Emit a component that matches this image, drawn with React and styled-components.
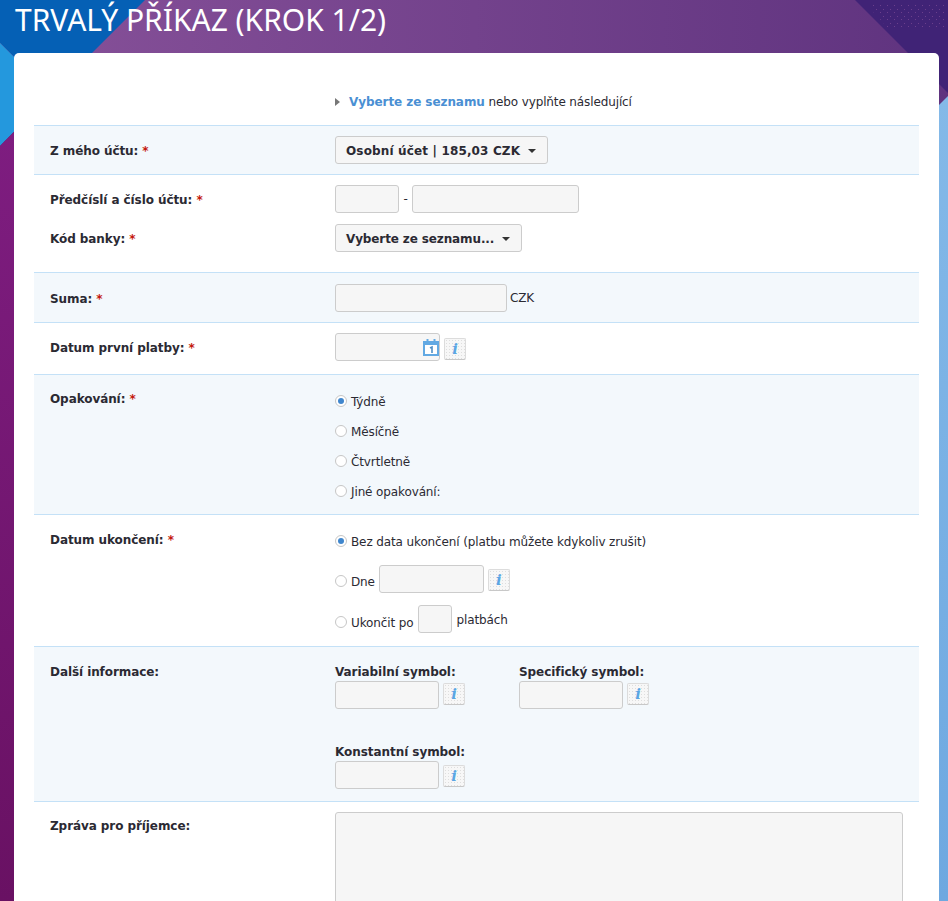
import React from "react"
import styled, { createGlobalStyle } from "styled-components"

const Global = createGlobalStyle`
html, body { margin: 0; padding: 0; height: 100%; overflow: hidden; }
body { font-family: "DejaVu Sans", Verdana, sans-serif; font-size: 12px; letter-spacing: -0.12px; color: #2b2a33; background: #6b1165; }
`

const Page = styled.div`
position: relative;
height: 100vh;
overflow: hidden;
`
const Backdrop = styled.svg`
position: absolute;
top: 0;
left: 0;
width: 948px;
height: 901px;
`
const Content = styled.div`
position: relative;
padding: 0 9px 0 14px;
`
const Title = styled.h1`
margin: 0 0 0 1px;
height: 53px;
line-height: 40px;
font-family: "Noto Sans", sans-serif;
font-size: 30px;
font-weight: 400;
letter-spacing: 0;
color: #fff;
`
const Card = styled.div`
background: #fff;
border-radius: 5px 5px 0 0;
padding: 0 20px;
`
const Intro = styled.div`
height: 72px;
padding-left: 301px;
display: flex;
align-items: center;
gap: 9px;
padding-top: 26px;
box-sizing: border-box;
`
const Arrow = styled.span`
width: 0;
height: 0;
border-left: 5px solid #777;
border-top: 4px solid transparent;
border-bottom: 4px solid transparent;
`
const Link = styled.a`
color: #4a8fd3;
font-weight: 700;
letter-spacing: -0.07px;
`
const Row = styled.div`
display: grid;
grid-template-columns: 301px 1fr;
row-gap: 11px;
align-items: ${(p) => (p.$top ? "start" : "center")};
padding: ${(p) => p.$pad || "10px 0"};
border-top: 1px solid #c4e1f7;
background: ${(p) => (p.$tint ? "#f3f8fc" : "#fff")};
`
const Label = styled.div`
padding: 2px 0 0 16px;
margin-top: ${(p) => p.$offset || 0}px;
line-height: 16px;
font-weight: 700;
letter-spacing: -0.08px;
color: #2b2a33;
`
const Star = styled.span`
color: #c4170c;
`
const Line = styled.div`
display: flex;
align-items: center;
gap: ${(p) => p.$gap ?? 4}px;
height: ${(p) => p.$height || 28}px;
margin-top: ${(p) => p.$mt || 0}px;
`
const Field = styled.input`
box-sizing: border-box;
display: block;
width: ${(p) => p.$w}px;
height: 28px;
padding: 0;
background: #f6f6f6;
border: 1px solid #ccc;
border-radius: 3px;
`
const Select = styled.button`
box-sizing: border-box;
display: inline-flex;
align-items: center;
justify-content: space-between;
width: ${(p) => p.$w}px;
height: 28px;
padding: 1px 11px 0 10px;
background: #f6f6f6;
border: 1px solid #ccc;
border-radius: 3px;
font: 700 12px "DejaVu Sans", sans-serif;
letter-spacing: ${(p) => p.$spacing ?? -0.12}px;
color: #2b2a33;
`
const Caret = styled.span`
width: 0;
height: 0;
border-top: 4px solid #333;
border-left: 4px solid transparent;
border-right: 4px solid transparent;
`
const DateBox = styled.div`
position: relative;
width: 105px;
height: 28px;
`
const CalendarSpot = styled.svg`
position: absolute;
top: 6px;
right: 1px;
width: 16px;
height: 17px;
`
const InfoButton = styled.button`
box-sizing: border-box;
align-self: flex-start;
flex: none;
width: 22px;
height: 22px;
margin-top: ${(p) => p.$top}px;
padding: 0;
background: radial-gradient(#dedede 0.6px, transparent 0.8px) 0 0 / 3px 3px, #f7f7f7;
border: 1px solid #dcdcdc;
border-bottom-color: #c8c8c8;
border-radius: 2px;
font: italic 700 15px/18px "DejaVu Serif", serif;
color: #5ba6e4;
`
const Radio = styled.span`
box-sizing: border-box;
flex: none;
display: flex;
align-items: center;
justify-content: center;
width: 12px;
height: 12px;
margin-top: ${(p) => p.$drop || 0}px;
border: 1px solid #c6c6c6;
border-radius: 50%;
background: #fff;
&::after {
  content: "";
  display: ${(p) => (p.$on ? "block" : "none")};
  width: 6px;
  height: 6px;
  border-radius: 50%;
  background: #3f86cd;
}
`
const ChoiceText = styled.span`
flex: none;
margin-top: ${(p) => p.$drop ?? 2}px;
margin-right: ${(p) => p.$after || 0}px;
`
const Symbols = styled.div`
display: grid;
grid-template-columns: 184px 184px;
row-gap: 35px;
`
const SymbolLabel = styled.div`
font-weight: 700;
line-height: 16px;
letter-spacing: -0.06px;
margin-bottom: 1px;
`
const Note = styled.textarea`
box-sizing: border-box;
display: block;
width: 568px;
height: 200px;
padding: 0;
background: #f6f6f6;
border: 1px solid #ccc;
border-radius: 3px;
resize: none;
`

const Calendar = () => (
  <CalendarSpot viewBox="0 0 16 17">
    <rect x="1" y="3" width="14" height="13" fill="#fff" stroke="#62a9e3" strokeWidth="2" />
    <rect x="1" y="2" width="14" height="4" fill="#62a9e3" />
    <rect x="3.5" y="0" width="2" height="4" fill="#62a9e3" />
    <rect x="10.5" y="0" width="2" height="4" fill="#62a9e3" />
    <path d="M7 9l2-1v6" fill="none" stroke="#4f8fc6" strokeWidth="1.6" />
  </CalendarSpot>
)

const Info = ({ top }) => <InfoButton $top={top}>i</InfoButton>

const Choice = ({ on, text, drop, textDrop, after, height, mt, children }) => (
  <Line $height={height || 30} $mt={mt}>
    <Radio $on={on} $drop={drop} />
    <ChoiceText $drop={textDrop} $after={after}>{text}</ChoiceText>
    {children}
  </Line>
)

const SymbolField = ({ label, top }) => (
  <div>
    <SymbolLabel>{label}</SymbolLabel>
    <Line>
      <Field $w={104} />
      <Info top={top} />
    </Line>
  </div>
)

const App = () => (
  <Page>
    <Global />
    <Backdrop viewBox="0 0 948 901">
      <defs>
        <linearGradient id="band" x1="0" x2="1" y1="0" y2="0">
          <stop offset="0" stopColor="#875199" />
          <stop offset="1" stopColor="#5f337f" />
        </linearGradient>
        <linearGradient id="left" x1="0" x2="0" y1="0" y2="1">
          <stop offset="0" stopColor="#7e1d80" />
          <stop offset="1" stopColor="#691163" />
        </linearGradient>
        <linearGradient id="right" x1="0" x2="0" y1="0" y2="1">
          <stop offset="0" stopColor="#84b9e8" />
          <stop offset="1" stopColor="#6ea8e0" />
        </linearGradient>
        <pattern id="dots" width="7" height="7" patternUnits="userSpaceOnUse">
          <rect x="1" y="2" width="1" height="1" fill="#6b3f8c" />
          <rect x="5" y="5" width="1" height="1" fill="#6b3f8c" />
        </pattern>
      </defs>
      <rect width="948" height="120" fill="url(#band)" />
      <polygon points="855,0 948,0 948,93" fill="#402376" />
      <polygon points="865,3 945,3 945,30 890,30" fill="url(#dots)" />
      <polygon points="0,0 145,0 51,94 0,43" fill="#0560b5" />
      <polygon points="0,43 51,94 0,146" fill="#2498dd" />
      <polygon points="0,146 14,132 14,901 0,901" fill="url(#left)" />
      <polygon points="948,96 939,105 939,901 948,901" fill="url(#right)" />
    </Backdrop>
    <Content>
      <Title>TRVALÝ PŘÍKAZ (KROK 1/2)</Title>
      <Card>
        <Intro>
          <Arrow />
          <span><Link>Vyberte ze seznamu</Link> nebo vyplňte následující</span>
        </Intro>
        <Row $tint>
          <Label>Z mého účtu: <Star>*</Star></Label>
          <div><Select $w={213} $spacing={0.15}>Osobní účet | 185,03 CZK <Caret /></Select></div>
        </Row>
        <Row $pad="10px 0 20px">
          <Label>Předčíslí a číslo účtu: <Star>*</Star></Label>
          <Line $gap={4.4}>
            <Field $w={64} />
            -
            <Field $w={167} />
          </Line>
          <Label>Kód banky: <Star>*</Star></Label>
          <div><Select $w={187}>Vyberte ze seznamu... <Caret /></Select></div>
        </Row>
        <Row $tint $pad="11px 0 10px">
          <Label $offset={-1}>Suma: <Star>*</Star></Label>
          <Line $gap={3}>
            <Field $w={172} />
            CZK
          </Line>
        </Row>
        <Row $pad="10px 0 13px">
          <Label>Datum první platby: <Star>*</Star></Label>
          <Line>
            <DateBox>
              <Field $w={105} />
              <Calendar />
            </DateBox>
            <Info top={5} />
          </Line>
        </Row>
        <Row $tint $top $pad="11px 0 8px">
          <Label $offset={3}>Opakování: <Star>*</Star></Label>
          <div>
            <Choice on text="Týdně" />
            <Choice text="Měsíčně" />
            <Choice text="Čtvrtletně" />
            <Choice text="Jiné opakování:" />
          </div>
        </Row>
        <Row $top $pad="11px 0 13px">
          <Label $offset={4}>Datum ukončení: <Star>*</Star></Label>
          <div>
            <Choice on text="Bez data ukončení (platbu můžete kdykoliv zrušit)" />
            <Choice text="Dne" height={28} mt={9} drop={4} textDrop={6}>
              <Field $w={105} />
              <Info top={4} />
            </Choice>
            <Choice text="Ukončit po" height={28} mt={12} drop={6} textDrop={8} after={1}>
              <Field $w={34} />
              <ChoiceText>platbách</ChoiceText>
            </Choice>
          </div>
        </Row>
        <Row $tint $top $pad="17px 0 12px">
          <Label $offset={-2}>Další informace:</Label>
          <Symbols>
            <SymbolField label="Variabilní symbol:" top={2} />
            <SymbolField label="Specifický symbol:" top={2} />
            <SymbolField label="Konstantní symbol:" top={4} />
          </Symbols>
        </Row>
        <Row $top>
          <Label $offset={4}>Zpráva pro příjemce:</Label>
          <Note />
        </Row>
      </Card>
    </Content>
  </Page>
)

export default App
